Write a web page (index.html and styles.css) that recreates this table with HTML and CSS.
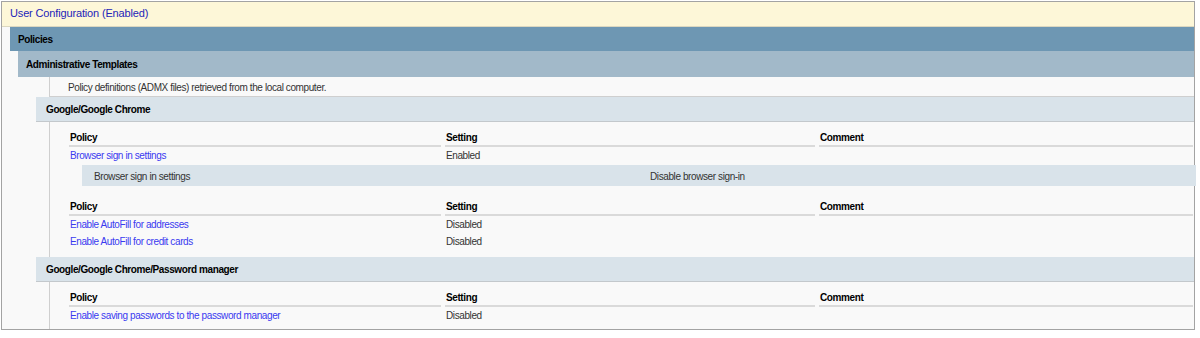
FILE: index.html
```html
<!DOCTYPE html>
<html>
<head>
<meta charset="utf-8">
<link rel="stylesheet" href="styles.css">
</head>
<body>
<div class="gpo">
  <div class="bar bar-user">User Configuration (Enabled)</div>
  <div class="bar bar-policies">Policies</div>
  <div class="bar bar-admx">Administrative Templates</div>
  <div class="desc">Policy definitions (ADMX files) retrieved from the local computer.</div>

  <div class="cat">Google/Google Chrome</div>
  <div class="catbody">
    <div class="ptable">
      <div class="phead"><span>Policy</span><span>Setting</span><span>Comment</span></div>
      <div class="prow"><span class="link">Browser sign in settings</span><span>Enabled</span><span></span></div>
    </div>
    <div class="nested"><span>Browser sign in settings</span><span>Disable browser sign-in</span></div>
    <div class="ptable ptable-after">
      <div class="phead"><span>Policy</span><span>Setting</span><span>Comment</span></div>
      <div class="prow"><span class="link">Enable AutoFill for addresses</span><span>Disabled</span><span></span></div>
      <div class="prow"><span class="link">Enable AutoFill for credit cards</span><span>Disabled</span><span></span></div>
    </div>
  </div>

  <div class="cat">Google/Google Chrome/Password manager</div>
  <div class="catbody catbody-last">
    <div class="ptable">
      <div class="phead"><span>Policy</span><span>Setting</span><span>Comment</span></div>
      <div class="prow"><span class="link">Enable saving passwords to the password manager</span><span>Disabled</span><span></span></div>
    </div>
  </div>
</div>
</body>
</html>
```
FILE: styles.css
```css
html, body {
  margin: 0;
  padding: 0;
  background: #ffffff;
}
body {
  font-family: "Liberation Sans", Arial, sans-serif;
  font-size: 10px;
  letter-spacing: -0.4px;
  color: #222222;
}
.gpo {
  margin: 1px 0 0 1px;
  width: 1192px;
  border: 1px solid #a3a3a3;
  background: #f9f9f9;
}
.bar {
  display: flex;
  align-items: center;
  padding-left: 8px;
  font-weight: bold;
  color: #000;
  box-sizing: border-box;
}
.bar-user {
  height: 25px;
  background: #fdf7d8;
  border-bottom: 1px solid #dcd8c0;
  color: #2424b8;
  font-weight: normal;
  font-size: 11px;
  letter-spacing: -0.15px;
  padding-bottom: 2px;
}
.bar-policies {
  margin-left: 8px;
  height: 24px;
  background: #6e97b3;
}
.bar-admx {
  margin-left: 16px;
  height: 26px;
  background: #a2b9c9;
}
.desc {
  margin-left: 47px;
  height: 20px;
  box-sizing: border-box;
  display: flex;
  align-items: center;
  padding: 1px 0 0 18px;
  border-left: 1px solid #cfcfcf;
  border-bottom: 1px solid #cfcfcf;
  color: #333;
}
.cat {
  margin-left: 34px;
  height: 25px;
  box-sizing: border-box;
  display: flex;
  align-items: center;
  padding: 1px 0 0 10px;
  background: #d9e3ea;
  border-bottom: 1px solid #c3c8cc;
  font-weight: bold;
  color: #000;
}
.catbody {
  margin-left: 47px;
  border-left: 1px solid #cfcfcf;
  padding: 0 1px 7px 19px;
}
.catbody-last {
  padding-bottom: 5px;
}
.ptable {
  display: flex;
  flex-direction: column;
}
.ptable-after {
  margin-top: 5px;
}
.phead, .prow {
  display: grid;
  grid-template-columns: 372px 370px 1fr;
  column-gap: 4px;
}
.phead span {
  padding: 8px 0 0 1px;
  line-height: 15px;
  font-weight: bold;
  color: #000;
  border-bottom: 2px solid #dadada;
}
.prow span {
  box-sizing: border-box;
  padding: 1px 0 0 1px;
  line-height: 16px;
  height: 17px;
  color: #333;
}
.prow span.link {
  color: #3a3af0;
}
.nested {
  margin: 1px -3px 0 13px;
  height: 21px;
  box-sizing: border-box;
  padding-top: 2px;
  display: grid;
  grid-template-columns: 1fr 1fr;
  align-items: center;
  padding-left: 2px;
  background: #d9e3ea;
  color: #333;
}
.nested span {
  padding: 0 10px;
}
```
